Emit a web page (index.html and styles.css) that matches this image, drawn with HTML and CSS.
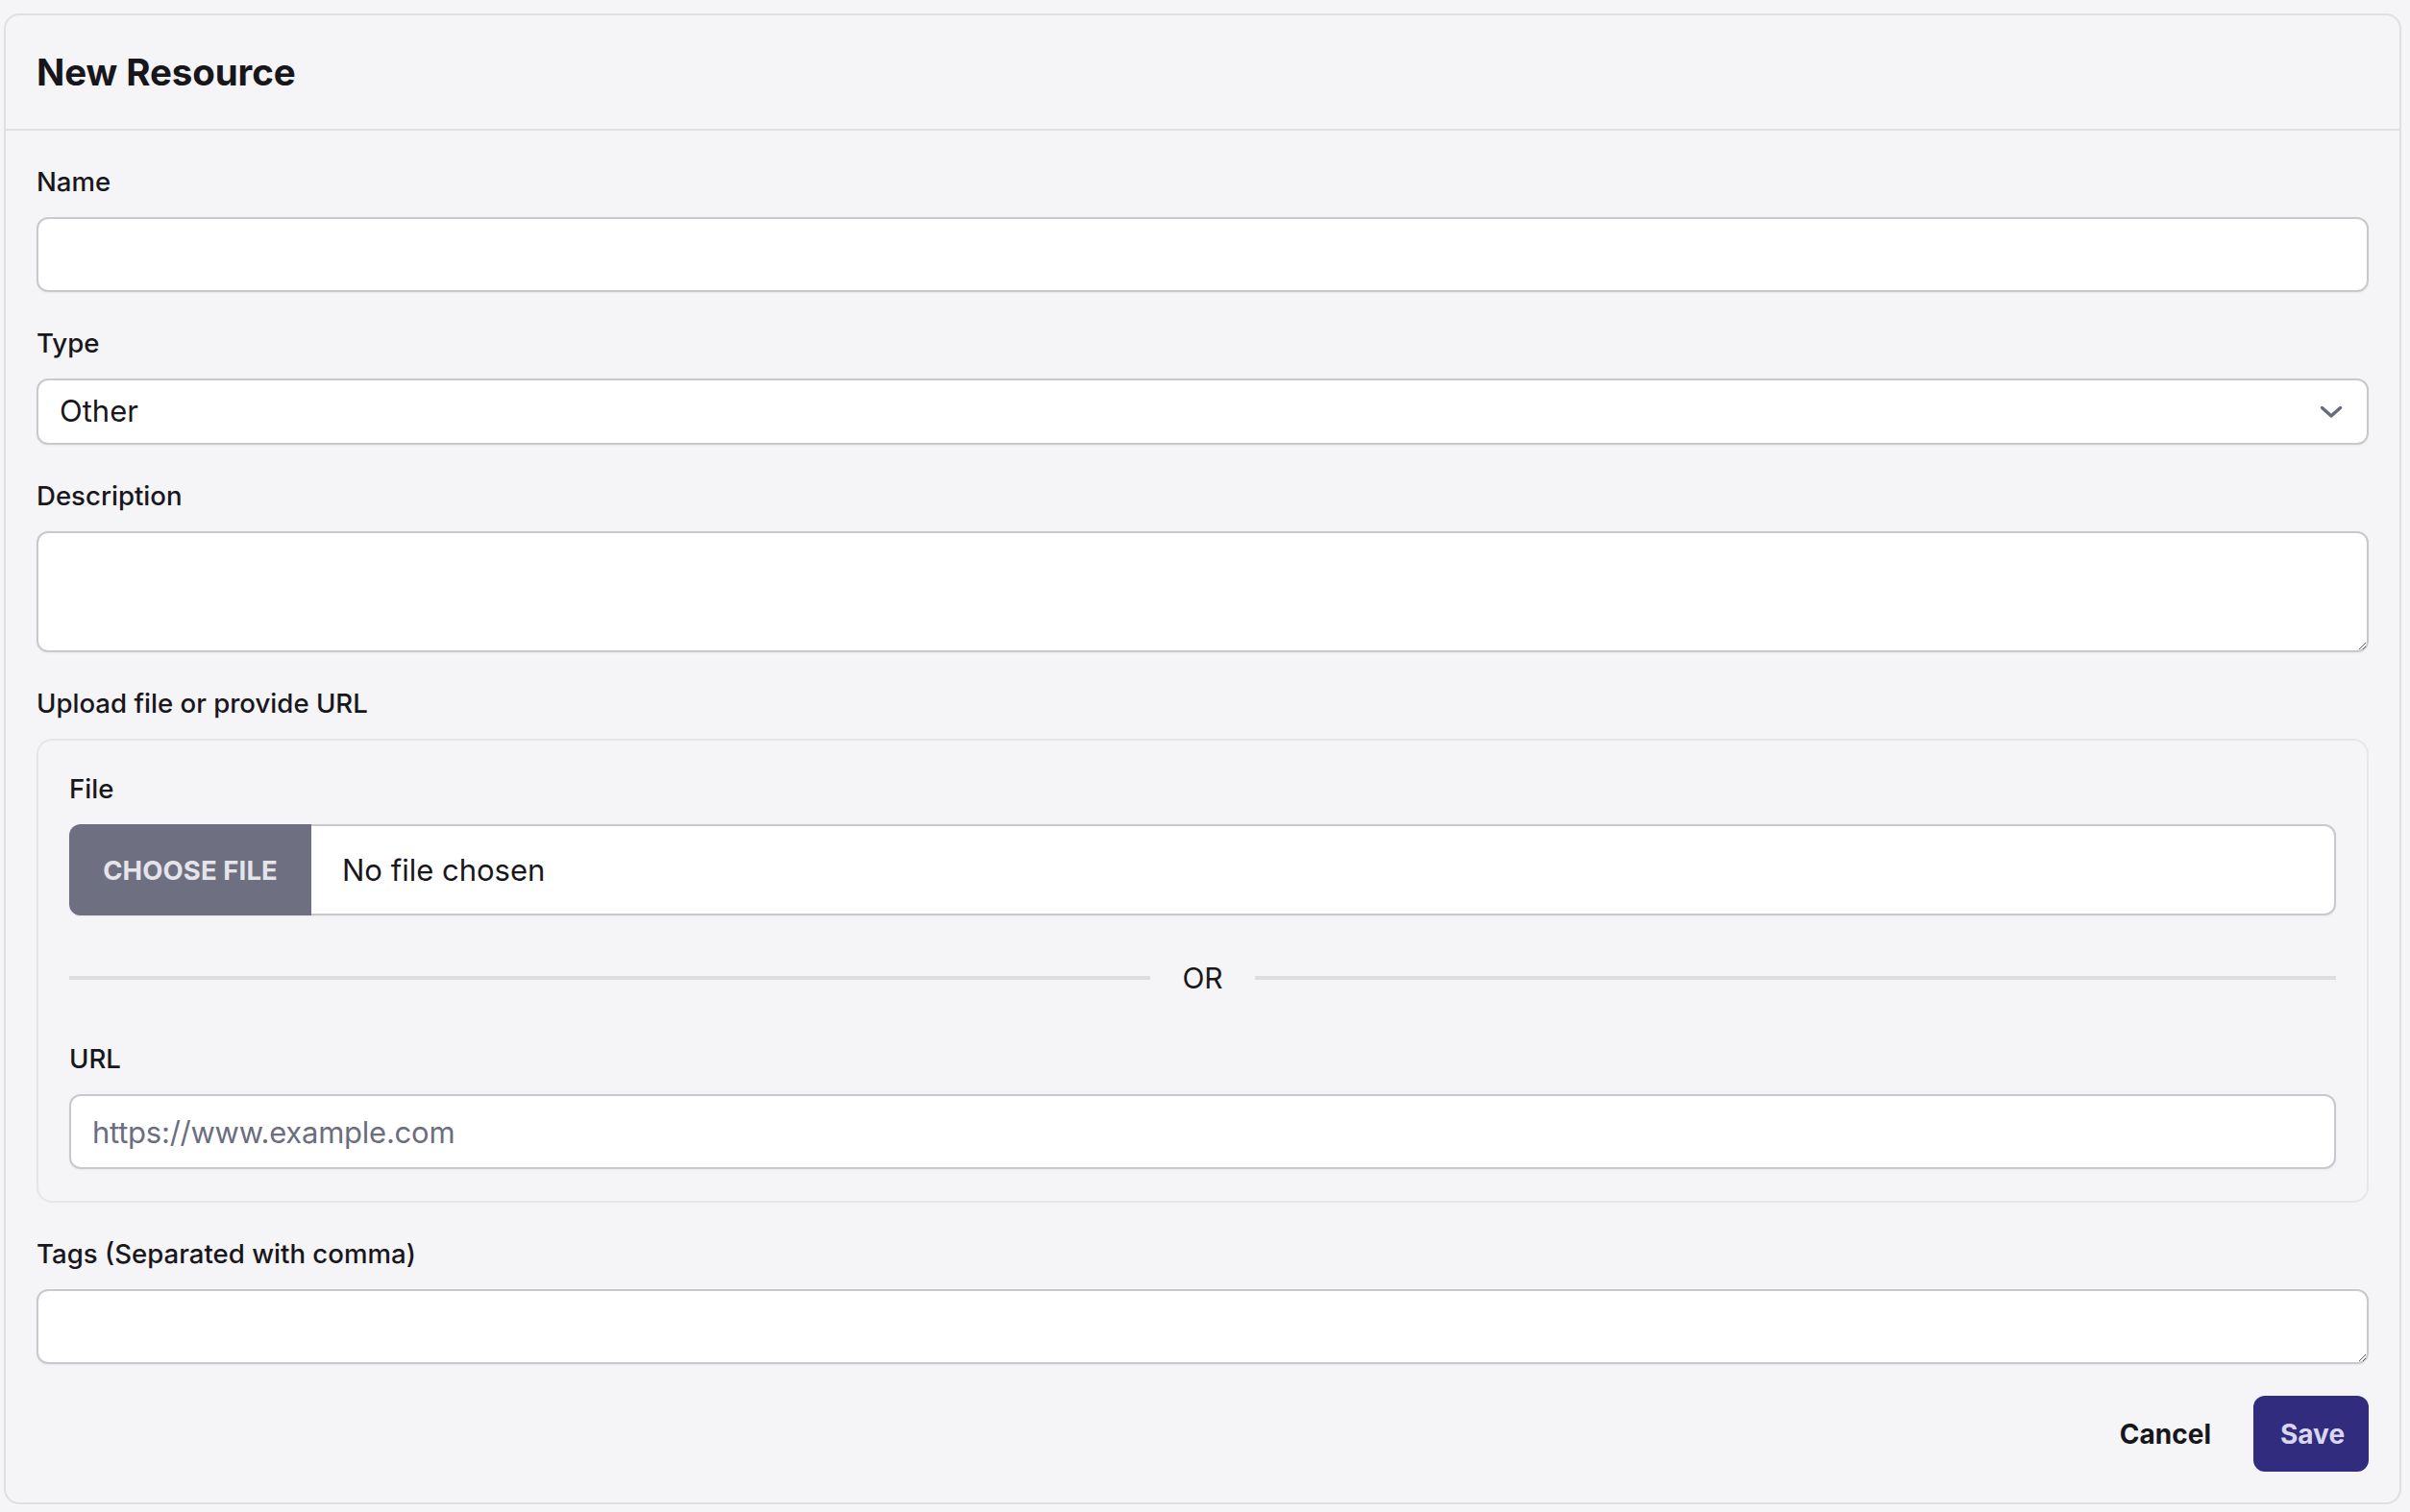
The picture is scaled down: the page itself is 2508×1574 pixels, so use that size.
FILE: index.html
```html
<!DOCTYPE html>
<html lang="en">
<head>
<meta charset="utf-8">
<title>New Resource</title>
<link rel="stylesheet" href="styles.css">
</head>
<body>
<form class="card">
  <header class="card-header">
    <h1 class="card-title">New Resource</h1>
  </header>
  <div class="card-body">
    <div class="field">
      <label class="label" for="name">Name</label>
      <input class="input" id="name" type="text">
    </div>
    <div class="field">
      <label class="label" for="type">Type</label>
      <div class="select-wrap">
        <select class="input select" id="type">
          <option>Other</option>
        </select>
        <svg class="chevron" viewBox="0 0 24 14" width="24" height="14" aria-hidden="true">
          <path d="M2.5 2.5 L12 11 L21.5 2.5" fill="none" stroke="#696a7d" stroke-width="3.4" stroke-linecap="round" stroke-linejoin="round"/>
        </svg>
      </div>
    </div>
    <div class="field">
      <label class="label" for="desc">Description</label>
      <textarea class="input textarea textarea-tall" id="desc"></textarea>
    </div>
    <div class="field">
      <span class="label label-box">Upload file or provide URL</span>
      <div class="upload-box">
        <span class="label">File</span>
        <label class="file-input">
          <input class="file-hidden" type="file">
          <span class="file-button">Choose file</span>
          <span class="file-text">No file chosen</span>
        </label>
        <div class="divider">
          <span class="divider-line"></span>
          <span class="divider-text">OR</span>
          <span class="divider-line"></span>
        </div>
        <label class="label" for="url">URL</label>
        <input class="input input-url" id="url" type="text" placeholder="https://www.example.com">
      </div>
    </div>
    <div class="field">
      <label class="label" for="tags">Tags (Separated with comma)</label>
      <textarea class="input textarea textarea-short" id="tags"></textarea>
    </div>
    <div class="actions">
      <button type="button" class="btn btn-cancel">Cancel</button>
      <button type="button" class="btn btn-save">Save</button>
    </div>
  </div>
</form>
</body>
</html>
```

FILE: styles.css
```css
* {
  box-sizing: border-box;
}

html, body {
  margin: 0;
  padding: 0;
  background: #f5f4f7;
}

body {
  font-family: Inter, "Liberation Sans", Arial, sans-serif;
  color: #18171c;
}

.card {
  display: block;
  margin: 14px 9px 8px 4px;
  background: #f5f4f7;
  border: 2px solid #dfdee3;
  border-radius: 16px;
}

.card-header {
  height: 120px;
  display: flex;
  align-items: center;
  padding: 0 32px;
  border-bottom: 2px solid #dfdee3;
}

.card-title {
  margin: 0;
  font-size: 38.5px;
  font-weight: 700;
  line-height: 48px;
  color: #17161b;
  letter-spacing: -0.1px;
}

.card-body {
  padding: 33px 32px 32px;
  display: flex;
  flex-direction: column;
  gap: 33px;
}

.field {
  display: flex;
  flex-direction: column;
}

.label {
  display: block;
  font-size: 27.6px;
  font-weight: 500;
  line-height: 40px;
  margin-bottom: 17px;
  color: #18171c;
}

.input {
  display: block;
  width: 100%;
  height: 78px;
  margin: 0;
  padding: 13px 22px;
  font-family: Inter, "Liberation Sans", Arial, sans-serif;
  font-size: 31px;
  line-height: 48px;
  color: #18171c;
  background: #ffffff;
  border: 2px solid #c9c8cd;
  border-radius: 12px;
  box-shadow: 0 1px 2px rgba(0, 0, 0, 0.05);
  outline: none;
}

.input::placeholder {
  color: #6b6d80;
  opacity: 1;
}

.input-url::placeholder {
  letter-spacing: -0.25px;
}

.select-wrap {
  position: relative;
}

.select {
  height: 69px;
  padding: 8px 70px 9px 22px;
  -webkit-appearance: none;
  appearance: none;
}

.chevron {
  position: absolute;
  right: 27px;
  top: 50%;
  margin-top: -7px;
  pointer-events: none;
}

.textarea {
  resize: vertical;
}

.textarea-tall {
  height: 126px;
}

.textarea-short {
  height: 78px;
}

.upload-box {
  border: 2px solid #e6e5ea;
  border-radius: 16px;
  background: #f5f4f7;
  padding: 30px 32px 33px;
}

.file-input {
  display: flex;
  align-items: center;
  height: 95px;
  background: #ffffff;
  border: 2px solid #c9c8cd;
  border-left: none;
  border-radius: 12px;
  box-shadow: 0 1px 2px rgba(0, 0, 0, 0.05);
  cursor: pointer;
}

.file-hidden {
  display: none;
}

.file-button {
  align-self: stretch;
  margin: -2px 0;
  width: 252px;
  display: flex;
  align-items: center;
  justify-content: center;
  background: #6e7081;
  color: #e4e4ea;
  border-radius: 12px 0 0 12px;
  font-size: 27.5px;
  font-weight: 700;
  text-transform: uppercase;
  letter-spacing: 0.1px;
}

.file-text {
  padding-left: 32px;
  font-size: 31px;
  color: #18171c;
}

.divider {
  display: flex;
  align-items: center;
  gap: 33px;
  height: 48px;
  margin: 41px 0 40px;
}

.divider-line {
  flex: 1;
  height: 4px;
  background: #dddce1;
}

.divider-text {
  font-size: 30px;
  line-height: 48px;
  color: #18171c;
}

.actions {
  display: flex;
  justify-content: flex-end;
  align-items: center;
  gap: 16px;
}

.btn {
  height: 79px;
  padding: 0 28px;
  border: none;
  border-radius: 12px;
  font-family: Inter, "Liberation Sans", Arial, sans-serif;
  font-size: 28px;
  font-weight: 700;
  cursor: pointer;
}

.btn-cancel {
  background: transparent;
  color: #17161b;
}

.btn-save {
  width: 120px;
  background: #312c7e;
  color: #d8d6f0;
}
```
